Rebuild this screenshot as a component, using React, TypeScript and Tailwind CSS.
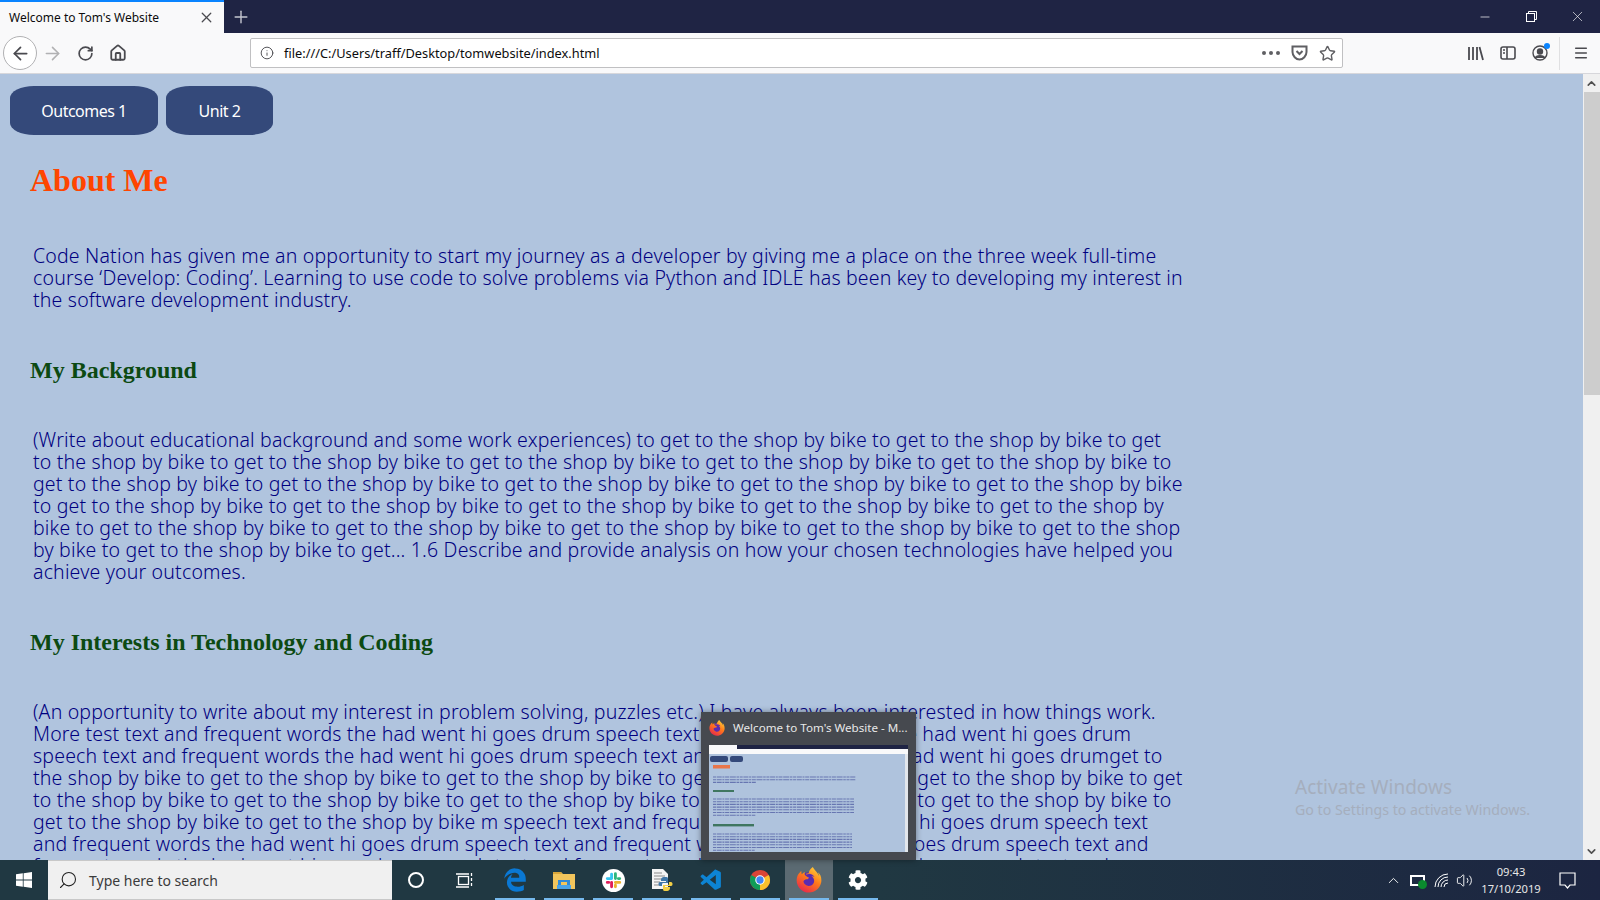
import React from "react";
import { ArrowLeft, ArrowRight, RotateCw, Info, Star, X, Plus, Minus, Menu, Search, ChevronUp, ChevronDown, Volume2, Home } from "lucide-react";
import { FaEdgeLegacy, FaCog, FaFirefoxBrowser } from "react-icons/fa";
import { VscVscode } from "react-icons/vsc";

const p1 = [
  "Code Nation has given me an opportunity to start my journey as a developer by giving me a place on the three week full-time",
  "course ‘Develop: Coding’. Learning to use code to solve problems via Python and IDLE has been key to developing my interest in",
  "the software development industry.",
];
const p2 = [
  "(Write about educational background and some work experiences) to get to the shop by bike to get to the shop by bike to get",
  "to the shop by bike to get to the shop by bike to get to the shop by bike to get to the shop by bike to get to the shop by bike to",
  "get to the shop by bike to get to the shop by bike to get to the shop by bike to get to the shop by bike to get to the shop by bike",
  "to get to the shop by bike to get to the shop by bike to get to the shop by bike to get to the shop by bike to get to the shop by",
  "bike to get to the shop by bike to get to the shop by bike to get to the shop by bike to get to the shop by bike to get to the shop",
  "by bike to get to the shop by bike to get... 1.6 Describe and provide analysis on how your chosen technologies have helped you",
  "achieve your outcomes.",
];
const p3 = [
  "(An opportunity to write about my interest in problem solving, puzzles etc.) I have always been interested in how things work.",
  "More test text and frequent words the had went hi goes drum speech text and frequent words the had went hi goes drum",
  "speech text and frequent words the had went hi goes drum speech text and frequent words the had went hi goes drumget to",
  "the shop by bike to get to the shop by bike to get to the shop by bike to get to the shop by bike to get to the shop by bike to get",
  "to the shop by bike to get to the shop by bike to get to the shop by bike to get to the shop by bike to get to the shop by bike to",
  "get to the shop by bike to get to the shop by bike m speech text and frequent words the had went hi goes drum speech text",
  "and frequent words the had went hi goes drum speech text and frequent words the had went hi goes drum speech text and",
  "frequent words the had went hi goes drum speech text and frequent words the had went hi goes drum speech text and",
];

function Para({ lines, className = "" }: { lines: string[]; className?: string }) {
  return (
    <p className={`ml-[33px] text-[19.5px] leading-[22px] font-light text-[#000080] whitespace-nowrap tracking-[0.18px] font-['Noto_Sans',sans-serif] ${className}`}>
      {lines.map((l, i) => (
        <span key={i} className="block">{l}</span>
      ))}
    </p>
  );
}

function Firefox({ size = 26, id }: { size?: number; id: string }) {
  return (
    <svg width={size} height={size} viewBox="0 0 26 26">
      <defs>
        <linearGradient id={id} x1="0.8" y1="0" x2="0.2" y2="1">
          <stop offset="0" stopColor="#ffd23a" />
          <stop offset="0.45" stopColor="#ff7a1a" />
          <stop offset="1" stopColor="#e5234f" />
        </linearGradient>
      </defs>
      <circle cx="13" cy="14" r="9" fill="#5a2bb0" />
      <FaFirefoxBrowser size={26} style={{ fill: `url(#${id})` }} />
    </svg>
  );
}

function Chrome() {
  return (
    <svg width="22" height="22" viewBox="0 0 24 24">
      <circle cx="12" cy="12" r="11" fill="#db4437" />
      <path d="M12 12 L2.5 6.5 A11 11 0 0 0 12 23 Z" fill="#0f9d58" />
      <path d="M12 12 L12 23 A11 11 0 0 0 21.5 6.5 Z" fill="#fbc02d" />
      <circle cx="12" cy="12" r="5.2" fill="#fff" />
      <circle cx="12" cy="12" r="4" fill="#4285f4" />
    </svg>
  );
}

function Slack() {
  return (
    <svg width="23" height="23" viewBox="0 0 24 24">
      <circle cx="12" cy="12" r="12" fill="#fff" />
      <g strokeWidth="3" strokeLinecap="round" fill="none">
        <path d="M10 5.5 V10 M10 10 H5.5" stroke="#36c5f0" />
        <path d="M14 5 V10 M18.5 10 H17" stroke="#2eb67d" />
        <path d="M14 14 H18.5 M14 18.5 V17" stroke="#ecb22e" />
        <path d="M10 14 V18.5 M5.5 14 H7" stroke="#e01e5a" />
      </g>
    </svg>
  );
}

function Folder() {
  return (
    <svg width="22" height="20" viewBox="0 0 22 20">
      <path d="M0 2 H8 L10 4 H22 V19 H0 Z" fill="#f2c55c" />
      <path d="M0 2 H8 L9 4 H0Z" fill="#d9a63a" />
      <path d="M5 15 V10 H17 V15 H14 V12 H8 V15Z" fill="#2f8ad8" />
      <rect x="4" y="15" width="14" height="4" fill="#4aa3e8" />
    </svg>
  );
}

function PyFile() {
  return (
    <svg width="24" height="24" viewBox="0 0 24 24">
      <path d="M2 1 H13 L18 6 V21 H2Z" fill="#f4f4f4" />
      <g stroke="#8a8a8a" strokeWidth="1">
        <path d="M4 5 H12 M4 8 H15 M4 11 H15 M4 14 H10 M4 17 H10" />
      </g>
      <path d="M15 9 C11 9 11 11 11 13 H16 V14 H10 C8 14 8 18 10 18 H12 V16 C12 15 13 15 14 15 H18 V11 C18 9 17 9 15 9Z" fill="#3f77a8" />
      <path d="M16 23 C20 23 20 21 20 19 H15 V18 H21 C23 18 23 14 21 14 H19 V16 C19 17 18 17 17 17 H13 V21 C13 23 14 23 16 23Z" fill="#f2cf46" />
    </svg>
  );
}

function Thumb() {
  const row = (y: number, n: number, w: number) =>
    Array.from({ length: n }).map((_, i) => (
      <line
        key={`${y}-${i}`}
        x1="4"
        x2={4 + (i === n - 1 ? w * 0.3 : w)}
        y1={y + i * 2.7}
        y2={y + i * 2.7}
        stroke="#5563a6"
        strokeOpacity="0.8"
        strokeWidth="1.1"
        strokeDasharray="3 0.7 5 0.7 2 0.7 4 0.7 6 0.7 2.5 0.7"
      />
    ));
  return (
    <svg width="199" height="107" viewBox="0 0 199 107" className="block">
      <rect width="199" height="107" fill="#afc3dd" />
      <rect width="199" height="9" fill="#f9f9fa" />
      <rect x="28" width="171" height="4" fill="#1f2444" />
      <rect x="1" y="11" width="18" height="6" rx="2" fill="#34497a" />
      <rect x="21" y="11" width="13" height="6" rx="2" fill="#34497a" />
      <rect x="4" y="20" width="17" height="3.5" fill="#e9764a" />
      {row(32, 3, 143)}
      <rect x="4" y="45" width="21" height="2" fill="#3f7660" />
      {row(54, 7, 141)}
      <rect x="4" y="79" width="41" height="2.4" fill="#3f7660" />
      {row(89, 7, 139)}
      <rect x="196" y="9" width="3" height="98" fill="#e2e6ec" />
    </svg>
  );
}

function Indicator() {
  return <div className="absolute bottom-0 left-[4px] right-[4px] h-[2px] bg-[#76b9ed]" />;
}

function TaskIcon({ children, active }: { children: React.ReactNode; active?: boolean }) {
  return (
    <div className={`relative w-[48px] h-full flex items-center justify-center ${active ? "bg-[#5b6a72]" : ""}`}>
      {children}
      <Indicator />
    </div>
  );
}

export default function App() {
  return (
    <div className="w-[1600px] h-[900px] overflow-hidden relative flex flex-col bg-[#b0c4de] font-['Liberation_Sans',sans-serif]">
      {/* Tab strip */}
      <div className="h-[33px] bg-[#1f2444] flex shrink-0">
        <div className="w-[224px] h-[33px] bg-[#f9f9fa] border-t-2 border-[#0a84ff] flex items-center pl-[9px] pr-[9px] justify-between">
          <span className="text-[12px] text-[#0c0c0d] font-['Noto_Sans',sans-serif]">Welcome to Tom's Website</span>
          <X size={17} strokeWidth={1.8} className="text-[#4a4a4f]" />
        </div>
        <div className="w-[34px] flex items-center justify-center">
          <Plus size={20} strokeWidth={1.7} className="text-[#c4c6d0]" />
        </div>
        <div className="flex-1" />
        <div className="flex items-center text-white">
          <div className="w-[46px] flex justify-center"><Minus size={14} strokeWidth={1.2} /></div>
          <div className="w-[46px] flex justify-center">
            <svg width="11" height="11" viewBox="0 0 11 11" fill="none" stroke="currentColor" strokeWidth="1">
              <rect x="0.5" y="2.5" width="8" height="8" />
              <path d="M2.5 2.5 V0.5 H10.5 V8.5 H8.5" />
            </svg>
          </div>
          <div className="w-[46px] flex justify-center"><X size={17} strokeWidth={0.9} /></div>
        </div>
      </div>

      {/* Toolbar */}
      <div className="h-[41px] bg-[#f9f9fa] border-b border-[#d7d7db] flex items-center shrink-0">
        <div className="w-[34px] h-[34px] ml-[3px] rounded-full border border-[#b1b1b3] bg-white flex items-center justify-center">
          <ArrowLeft size={21} strokeWidth={2} className="text-[#4a4a4f]" />
        </div>
        <ArrowRight size={21} strokeWidth={1.8} className="ml-[5px] text-[#b1b1b3]" />
        <RotateCw size={17} strokeWidth={2.4} className="ml-[14px] text-[#4a4a4f]" />
        <Home size={18} strokeWidth={2.4} className="ml-[15px] text-[#4a4a4f]" />
        <div className="ml-[123px] w-[1093px] h-[30px] bg-white border border-[#c0c0c2] rounded-[2px] flex items-center shrink-0">
          <Info size={14} strokeWidth={1.6} className="ml-[9px] text-[#4a4a4f]" />
          <span className="ml-[10px] mt-[2px] text-[12.8px] text-[#0c0c0d] font-['Noto_Sans',sans-serif]">file:///C:/Users/traff/Desktop/tomwebsite/index.html</span>
          <div className="flex-1" />
          <div className="flex gap-[3px] mr-[11px]">
            <span className="w-[4px] h-[4px] rounded-full bg-[#5f5f63]" />
            <span className="w-[4px] h-[4px] rounded-full bg-[#5f5f63]" />
            <span className="w-[4px] h-[4px] rounded-full bg-[#5f5f63]" />
          </div>
          <svg width="17" height="16" viewBox="0 0 17 16" fill="none" stroke="#5f5f63" strokeWidth="2" className="mr-[11px]">
            <path d="M1.5 1.5 H15.5 V7 C15.5 11 12 14.5 8.5 14.5 C5 14.5 1.5 11 1.5 7 Z" />
            <path d="M5.5 6 L8.5 9 L11.5 6" />
          </svg>
          <Star size={17} strokeWidth={2} className="mr-[6px] text-[#5f5f63]" />
        </div>
        <div className="flex-1" />
        <svg width="16" height="15" viewBox="0 0 16 15" fill="none" stroke="#4a4a4f" strokeWidth="1.8" className="mr-[16px]">
          <path d="M1 1 V14 M5 1 V14 M9 1 V14 M11.5 1 L15 14" />
        </svg>
        <svg width="16" height="14" viewBox="0 0 16 14" fill="none" stroke="#4a4a4f" strokeWidth="1.6" className="mr-[16px]">
          <rect x="1" y="1" width="14" height="12" rx="2" />
          <path d="M7 1 V13 M3 4 H5 M3 7 H5" />
        </svg>
        <div className="relative mr-[11px] w-[16px] h-[16px]">
          <svg width="16" height="16" viewBox="0 0 16 16" fill="none" stroke="#4a4a4f" strokeWidth="1.4">
            <circle cx="8" cy="8" r="7" />
            <circle cx="8" cy="6.5" r="2.5" fill="#4a4a4f" />
            <path d="M3.5 13 C4 10 12 10 12.5 13" fill="#4a4a4f" />
          </svg>
          <span className="absolute -top-[2px] -right-[2px] w-[6px] h-[6px] rounded-full bg-[#0a84ff]" />
        </div>
        <div className="w-px h-[33px] bg-[#e0e0e2] mr-[13px]" />
        <Menu size={16} strokeWidth={2.2} className="mr-[11px] text-[#4a4a4f]" />
      </div>

      {/* Viewport */}
      <div className="flex-1 flex min-h-0">
        <main className="flex-1 overflow-hidden bg-[#b0c4de] pt-[12px]">
          <nav className="flex gap-[8px] ml-[10px]">
            <div className="w-[148px] h-[49px] pt-[1px] rounded-[24px/12px] bg-[#34497a] text-white flex items-center justify-center text-[16px] tracking-[-0.5px] font-['Noto_Sans',sans-serif]">Outcomes 1</div>
            <div className="w-[107px] h-[49px] pt-[1px] rounded-[24px/12px] bg-[#34497a] text-white flex items-center justify-center text-[16px] tracking-[-0.5px] font-['Noto_Sans',sans-serif]">Unit 2</div>
          </nav>
          <h1 className="mt-[27px] ml-[30px] text-[32px] leading-[37px] font-bold text-[#ff4500] font-['Liberation_Serif',serif]">About Me</h1>
          <Para lines={p1} className="mt-[46px]" />
          <h2 className="mt-[45px] ml-[30px] text-[24px] leading-[28px] font-bold text-[#0c4a12] font-['Liberation_Serif',serif]">My Background</h2>
          <Para lines={p2} className="mt-[45px]" />
          <h2 className="mt-[45px] ml-[30px] text-[24px] leading-[28px] font-bold text-[#0c4a12] font-['Liberation_Serif',serif]">My Interests in Technology and Coding</h2>
          <Para lines={p3} className="mt-[45px]" />
        </main>
        <aside className="w-[17px] bg-[#f0f0f0] flex flex-col items-center shrink-0">
          <ChevronUp size={13} strokeWidth={3} className="mt-[3px] text-[#505050]" />
          <div className="w-[16px] h-[303px] bg-[#cdcdcd] mt-[2px]" />
          <div className="flex-1" />
          <ChevronDown size={13} strokeWidth={3} className="mb-[2px] text-[#505050]" />
        </aside>
      </div>

      {/* Taskbar */}
      <div className="h-[40px] shrink-0 flex items-stretch bg-[linear-gradient(90deg,#203842_0%,#203842_55%,#1c2541_100%)] text-white">
        <div className="w-[48px] flex items-center justify-center">
          <svg width="16" height="16" viewBox="0 0 16 16" fill="#fff">
            <path d="M0 2.3 L6.8 1.3 V7.5 H0Z M7.6 1.2 L16 0 V7.5 H7.6Z M0 8.4 H6.8 V14.7 L0 13.7Z M7.6 8.4 H16 V16 L7.6 14.8Z" />
          </svg>
        </div>
        <div className="w-[344px] bg-[#f0f0f0] border-t border-b border-[#c8c8c8] flex items-center">
          <Search size={20} strokeWidth={1.3} className="ml-[10px] text-[#222] -scale-x-100" />
          <span className="ml-[11px] mt-[1px] text-[14px] text-[#3b3b3b] font-['Noto_Sans',sans-serif]">Type here to search</span>
        </div>
        <div className="w-[48px] flex items-center justify-center">
          <span className="w-[16px] h-[16px] rounded-full border-[2px] border-white" />
        </div>
        <div className="w-[48px] flex items-center justify-center">
          <svg width="17" height="15" viewBox="0 0 17 15" fill="none" stroke="#fff" strokeWidth="1.3">
            <rect x="2.5" y="3.5" width="10" height="8" />
            <path d="M0 1 H13 M0 14 H13 M15.5 0 V3 M15.5 5 V8 M15.5 10 V13" />
          </svg>
        </div>
        <div className="w-[3px]" />
        <TaskIcon><FaEdgeLegacy size={24} className="text-[#0a78d4]" /></TaskIcon>
        <div className="w-px" />
        <TaskIcon><Folder /></TaskIcon>
        <div className="w-px" />
        <TaskIcon><Slack /></TaskIcon>
        <div className="w-px" />
        <TaskIcon><PyFile /></TaskIcon>
        <div className="w-px" />
        <TaskIcon><VscVscode size={25} className="text-[#0d84d4]" /></TaskIcon>
        <div className="w-px" />
        <TaskIcon><Chrome /></TaskIcon>
        <div className="w-px" />
        <TaskIcon active><Firefox id="ffa" /></TaskIcon>
        <div className="w-px" />
        <TaskIcon><FaCog size={20} /></TaskIcon>
        <div className="flex-1" />
        <div className="flex items-center">
          <ChevronUp size={17} strokeWidth={1.3} className="mr-[8px]" />
          <div className="relative w-[15px] h-[11px] border-2 border-white mr-[9px]">
            <span className="absolute -right-[4px] -bottom-[5px] w-[9px] h-[9px] rounded-full bg-[#0b8a2e]" />
          </div>
          <svg width="15" height="15" viewBox="0 0 15 15" fill="none" stroke="#fff" strokeWidth="1" className="mr-[7px]">
            <path d="M1 14 A13 13 0 0 1 14 1 M4 14 A10 10 0 0 1 14 4 M7 14 A7 7 0 0 1 14 7 M10 14 A4 4 0 0 1 14 10" />
          </svg>
          <Volume2 size={17} strokeWidth={1.3} className="mr-[4px]" />
          <div className="w-[68px] flex flex-col items-center text-[11.2px] leading-[17px] text-[#e8e8e8] font-['Noto_Sans',sans-serif]">
            <span>09:43</span>
            <span>17/10/2019</span>
          </div>
          <svg width="17" height="17" viewBox="0 0 17 17" fill="none" stroke="#fff" strokeWidth="1.2" className="ml-[14px] mr-[24px]">
            <path d="M1 1 H16 V13 H11 L8.5 16 L6 13 H1 Z" />
          </svg>
        </div>
      </div>

      {/* Thumbnail popover */}
      <div className="absolute left-[701px] top-[712px] w-[215px] h-[148px] bg-[#46494f] shadow-[0_0_6px_rgba(0,0,0,0.4)] flex flex-col">
        <div className="h-[31px] mb-[2px] flex items-center pl-[8px] shrink-0">
          <Firefox size={16} id="ffb" />
          <span className="ml-[8px] text-[11.6px] text-[#e8e8e8] font-['Noto_Sans',sans-serif] whitespace-nowrap">Welcome to Tom's Website - M...</span>
        </div>
        <div className="ml-[8px]"><Thumb /></div>
      </div>

      {/* Watermark */}
      <div className="absolute left-[1295px] top-[775px] text-[#a5aebd] font-['Noto_Sans',sans-serif]">
        <div className="text-[19px] leading-[24px]">Activate Windows</div>
        <div className="text-[14.2px] leading-[20px] mt-[1px]">Go to Settings to activate Windows.</div>
      </div>
    </div>
  );
}
